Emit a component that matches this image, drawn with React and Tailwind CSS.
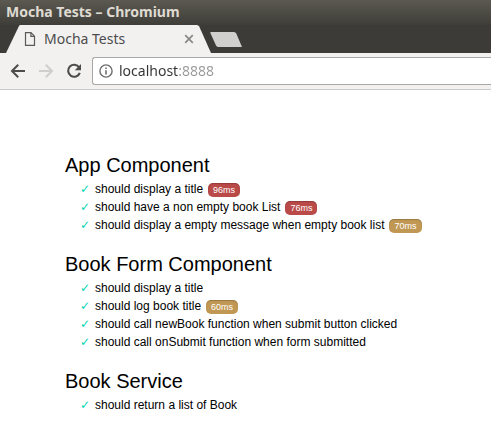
import React from "react";

const suites = [
  {
    title: "App Component",
    tests: [
      { name: "should display a title", time: "96ms", speed: "slow" },
      { name: "should have a non empty book List", time: "76ms", speed: "slow" },
      { name: "should display a empty message when empty book list", time: "70ms", speed: "medium" },
    ],
  },
  {
    title: "Book Form Component",
    tests: [
      { name: "should display a title" },
      { name: "should log book title", time: "60ms", speed: "medium" },
      { name: "should call newBook function when submit button clicked" },
      { name: "should call onSubmit function when form submitted" },
    ],
  },
  {
    title: "Book Service",
    tests: [{ name: "should return a list of Book" }],
  },
];

const speedColor = { slow: "bg-[#b94a48]", medium: "bg-[#c09853]" };

function TabStrip() {
  return (
    <div className="flex h-7 bg-[#3c3b37] pl-[6px]">
      <div
        role="tab"
        aria-selected="true"
        className="flex h-full w-[205px] items-center bg-[#f2f1f0] pr-[14px] pl-[18px] [clip-path:polygon(13px_1px,14px_0,191px_0,193px_1px,205px_100%,0_100%)]"
      >
        <svg width="12" height="16" viewBox="0 0 12 16" fill="none" stroke="#5a5a5a" strokeWidth="1.2" aria-hidden="true">
          <path d="M1.5 1.6H7L10.5 5.2V14.4H1.5Z M6.9 1.6V5.4H10.5" />
        </svg>
        <span className="ml-2 flex-1 text-sm whitespace-nowrap text-[#4c4c4c]">Mocha Tests</span>
        <button aria-label="Close tab" className="flex h-4 w-4 items-center justify-center">
          <svg width="10" height="10" viewBox="0 0 10 10" stroke="#888" strokeWidth="1.7">
            <path d="M1.2 1.2L8.8 8.8M8.8 1.2L1.2 8.8" />
          </svg>
        </button>
      </div>
      <button aria-label="New tab" className="-ml-px mt-[7px] h-[15px] w-8">
        <svg width="32" height="15" viewBox="0 0 32 15">
          <path d="M1 0H24Q25.6 0 26.3 1.5L32 15H8.2Q6.6 15 6 13.6L0.4 1Q0 0 1 0Z" fill="#d0cfce" />
        </svg>
      </button>
    </div>
  );
}

function Toolbar() {
  return (
    <div className="flex h-[37px] items-center border-b border-[#cbcaca] bg-[#f2f1f0] pl-[10px]">
      <button aria-label="Back" className="h-4 w-4">
        <svg width="16" height="16" viewBox="0 0 16 16" fill="none" stroke="#4c4c4c" strokeWidth="2">
          <path d="M15 8H2.4M8.2 1.8L2 8L8.2 14.2" />
        </svg>
      </button>
      <button aria-label="Forward" disabled className="ml-3 h-4 w-4">
        <svg width="16" height="16" viewBox="0 0 16 16" fill="none" stroke="#cfcecd" strokeWidth="2">
          <path d="M1 8H13.6M7.8 1.8L14 8L7.8 14.2" />
        </svg>
      </button>
      <button aria-label="Reload" className="ml-3 h-4 w-4">
        <svg width="16" height="16" viewBox="0 0 16 16" fill="none">
          <path d="M13.2 4.5A6 6 0 1 0 13.8 9.8" stroke="#4c4c4c" strokeWidth="2.1" />
          <path d="M15 1V7.2H8.8Z" fill="#4c4c4c" />
        </svg>
      </button>
      <div className="ml-[10px] flex h-7 flex-1 items-center rounded-l-[3px] border border-r-0 border-[#a9a8a7] bg-white pl-[6px]">
        <svg width="14" height="14" viewBox="0 0 14 14" fill="none" stroke="#6e6e6e" strokeWidth="1.4" aria-hidden="true">
          <circle cx="7" cy="7" r="6.1" />
          <path d="M7 6.2V10.4M7 3.4V5" strokeWidth="1.6" />
        </svg>
        <input
          aria-label="Address"
          defaultValue="localhost:8888"
          className="ml-[6px] h-6 min-w-0 flex-1 bg-[linear-gradient(90deg,#333_59px,#999_59px)] bg-clip-text pb-[2px] text-sm text-transparent outline-none"
        />
      </div>
    </div>
  );
}

function Test({ name, time, speed }) {
  return (
    <li className="flex h-[18px] items-center text-xs leading-[18px] whitespace-nowrap">
      <span aria-hidden="true" className="w-[15px] text-[#00d6b2]">
        ✓
      </span>
      <span>{name}</span>
      {time && (
        <span
          className={`ml-[5px] mt-px h-[14px] rounded-[5px] px-[5px] text-[9px] leading-[14px] text-white shadow-[inset_0_1px_1px_rgba(0,0,0,0.2)] ${speedColor[speed]}`}
        >
          {time}
        </span>
      )}
    </li>
  );
}

export default function App() {
  return (
    <div className="min-h-screen bg-white">
      <header className="font-['Noto_Sans','Open_Sans',sans-serif]">
        <div className="flex h-[25px] items-center bg-linear-to-b from-[#5b5950] to-[#3f3e39] pb-[2px] pl-[6px] text-sm font-bold whitespace-nowrap text-[#dfdbd2]">
          Mocha Tests – Chromium
        </div>
        <TabStrip />
        <Toolbar />
      </header>
      <main className="flex flex-col gap-[15px] pt-[60px] pl-[65px] font-['Liberation_Sans','DejaVu_Sans',sans-serif] text-black">
        {suites.map((suite) => (
          <section key={suite.title}>
            <h1 className="text-xl leading-[30px]">{suite.title}</h1>
            <ul className="pl-[15px]">
              {suite.tests.map((test) => (
                <Test key={test.name} {...test} />
              ))}
            </ul>
          </section>
        ))}
      </main>
    </div>
  );
}
